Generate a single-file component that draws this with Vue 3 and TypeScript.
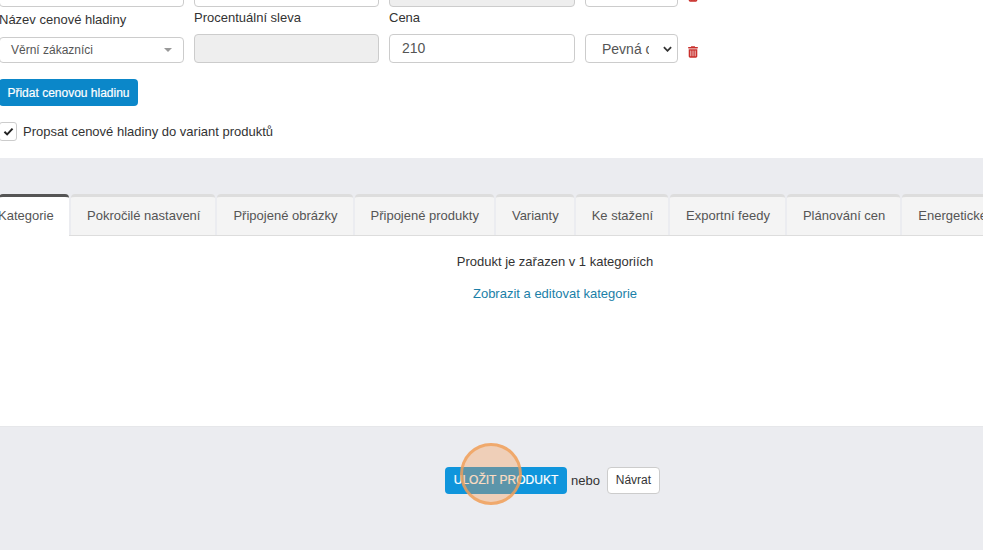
<template>
  <div class="page">
    <section class="form-card">
      <!-- Row cut off by the top of the viewport -->
      <div class="price-row stub-row">
        <div class="field stub"></div>
        <div class="field stub"></div>
        <div class="field stub field--disabled"></div>
        <div class="field stub"></div>
        <svg class="trash" viewBox="0 0 448 512"><path :d="trashPath" /></svg>
      </div>

      <div class="price-row price-row--main">
        <div class="col col--name">
          <label class="label">Název cenové hladiny</label>
          <div class="fake-select">
            <span>Věrní zákazníci</span>
            <i class="caret"></i>
          </div>
        </div>
        <div class="col">
          <label class="label">Procentuální sleva</label>
          <div class="field field--disabled"></div>
        </div>
        <div class="col">
          <label class="label">Cena</label>
          <div class="field">210</div>
        </div>
        <div class="col col--end">
          <div class="field native-select">
            <span class="native-text">Pevná cena</span>
            <svg class="chevron" viewBox="0 0 10 6"><path d="M1 1l4 4 4-4" /></svg>
          </div>
        </div>
        <svg class="trash" viewBox="0 0 448 512"><path :d="trashPath" /></svg>
      </div>

      <button class="btn btn--small">Přidat cenovou hladinu</button>

      <div class="check-row">
        <span class="checkbox">
          <svg viewBox="0 0 12 10"><path d="M1.5 5.2l3 3 6-6.4" /></svg>
        </span>
        <span>Propsat cenové hladiny do variant produktů</span>
      </div>
    </section>

    <nav class="tabs">
      <a
        v-for="(tab, idx) in tabs"
        :key="tab"
        class="tab"
        :class="{ 'tab--active': idx === 0 }"
      >{{ tab }}</a>
    </nav>

    <section class="panel">
      <p class="panel-text">Produkt je zařazen v 1 kategoriích</p>
      <a class="panel-link">Zobrazit a editovat kategorie</a>
    </section>

    <footer class="actions">
      <button class="btn btn--save">ULOŽIT PRODUKT</button>
      <span class="or">nebo</span>
      <button class="btn-back">Návrat</button>
      <div class="click-ring"></div>
    </footer>
  </div>
</template>

<script setup lang="ts">
const tabs: string[] = [
  'Kategorie',
  'Pokročilé nastavení',
  'Připojené obrázky',
  'Připojené produkty',
  'Varianty',
  'Ke stažení',
  'Exportní feedy',
  'Plánování cen',
  'Energetické štítky'
]

const trashPath =
  'M135 14C140 5 150 0 160 0h128c10 0 20 5 25 14l7 18h96c18 0 32 14 32 32s-14 32-32 32H32C14 96 0 82 0 64s14-32 32-32h96l7-18zM32 128h384v320c0 35-29 64-64 64H96c-35 0-64-29-64-64V128zm96 64c-9 0-16 7-16 16v224c0 9 7 16 16 16s16-7 16-16V208c0-9-7-16-16-16zm96 0c-9 0-16 7-16 16v224c0 9 7 16 16 16s16-7 16-16V208c0-9-7-16-16-16zm96 0c-9 0-16 7-16 16v224c0 9 7 16 16 16s16-7 16-16V208c0-9-7-16-16-16z'
</script>

<style>
html,
body {
  margin: 0;
  overflow: hidden;
}
</style>

<style scoped>
.page {
  width: 983px;
  height: 550px;
  overflow: hidden;
  background: #ebecf0;
  font-family: "Liberation Sans", Arial, sans-serif;
  font-size: 13px;
  color: #333;
}

.form-card {
  height: 158px;
  box-sizing: border-box;
  background: #fff;
  overflow: hidden;
}

.price-row {
  display: grid;
  grid-template-columns: 185px 185px 186px 93px 12px;
  column-gap: 10px;
  margin-left: -1px;
  align-items: end;
}

.price-row--main {
  margin-top: 3px;
}

.stub-row {
  margin-top: -22px;
}

.col {
  display: flex;
  flex-direction: column;
}

.col--name .label {
  margin-bottom: 10px;
}

.label {
  margin-bottom: 9px;
  line-height: 15px;
}

.field {
  height: 29px;
  box-sizing: border-box;
  border: 1px solid #ccc;
  border-radius: 4px;
  background: #fff;
  padding: 0 12px;
  line-height: 27px;
  font-size: 14px;
  color: #555;
}

.field--disabled {
  background: #eee;
}

.fake-select {
  display: flex;
  align-items: center;
  justify-content: space-between;
  height: 26px;
  box-sizing: border-box;
  border: 1px solid #ccc;
  border-radius: 4px;
  padding: 0 11px;
  font-size: 12px;
  color: #555;
}

.caret {
  width: 0;
  height: 0;
  border-left: 4px solid transparent;
  border-right: 4px solid transparent;
  border-top: 4px solid #999;
}

.native-select {
  display: flex;
  align-items: center;
  justify-content: space-between;
  padding: 0 5px 0 16px;
}

.native-text {
  width: 47px;
  margin-top: 2px;
  overflow: hidden;
  white-space: nowrap;
}

.chevron {
  width: 9px;
  height: 6px;
  fill: none;
  stroke: #333;
  stroke-width: 2;
}

.trash {
  width: 10px;
  height: 12px;
  margin-bottom: 5px;
  fill: #c9302c;
}

.btn {
  display: block;
  border: 0;
  background: #0f8fcf;
  color: #fff;
  font-family: inherit;
  font-weight: 400;
  border-radius: 4px;
  padding: 0;
}

.btn--small {
  width: 139px;
  height: 27px;
  margin: 16px 0 0 -1px;
  font-size: 12px;
  background: #0b87c9;
  -webkit-text-stroke: 0.2px #fff;
}

.check-row {
  display: flex;
  align-items: center;
  gap: 6px;
  margin: 16px 0 0 -1px;
}

.checkbox {
  display: flex;
  align-items: center;
  justify-content: center;
  width: 18px;
  height: 19px;
  box-sizing: border-box;
  border: 1px solid #ccc;
  border-radius: 3px;
  background: #fff;
}

.checkbox svg {
  width: 11px;
  height: 9px;
  fill: none;
  stroke: #222;
  stroke-width: 2.2;
}

.tabs {
  display: flex;
  gap: 2px;
  margin: 36px 0 0 -1px;
  height: 42px;
  box-sizing: border-box;
  border-bottom: 1px solid #ddd;
  white-space: nowrap;
}

.tab {
  flex-shrink: 0;
  box-sizing: border-box;
  height: 41px;
  padding: 0 15px 0 16px;
  border-top: 3px solid #ddd;
  border-radius: 4px 4px 0 0;
  background: #f4f4f4;
  line-height: 37px;
  color: #555;
}

.tab--active {
  width: 70px;
  height: 42px;
  padding: 0;
  text-indent: -1px;
  border-top-color: #555;
  background: #fff;
}

.panel {
  height: 191px;
  box-sizing: border-box;
  padding: 17px 0 0 127px;
  background: #fff;
  border-bottom: 1px solid #e6e7ea;
  text-align: center;
}

.panel-text {
  margin: 0 0 14px;
  line-height: 18px;
  color: #333;
}

.panel-link {
  color: #1b7fa8;
  line-height: 18px;
}

.actions {
  position: relative;
  display: flex;
  align-items: center;
  height: 27px;
  margin-top: 40px;
  padding-left: 445px;
}

.btn--save {
  width: 122px;
  height: 27px;
  padding-bottom: 2px;
  background: #0f95dc;
  font-size: 12px;
  -webkit-text-stroke: 0.2px #fff;
}

.or {
  margin: 0 7px 1px 4px;
}

.btn-back {
  width: 53px;
  height: 27px;
  box-sizing: border-box;
  border: 1px solid #ccc;
  border-radius: 4px;
  background: #fff;
  color: #333;
  font-family: inherit;
  font-size: 12px;
  padding: 0 0 1px;
}

.click-ring {
  position: absolute;
  left: 460px;
  top: -24px;
  width: 62px;
  height: 62px;
  box-sizing: border-box;
  border: 3px solid rgba(240, 160, 90, 0.8);
  border-radius: 50%;
  background: rgba(250, 150, 70, 0.33);
}
</style>
